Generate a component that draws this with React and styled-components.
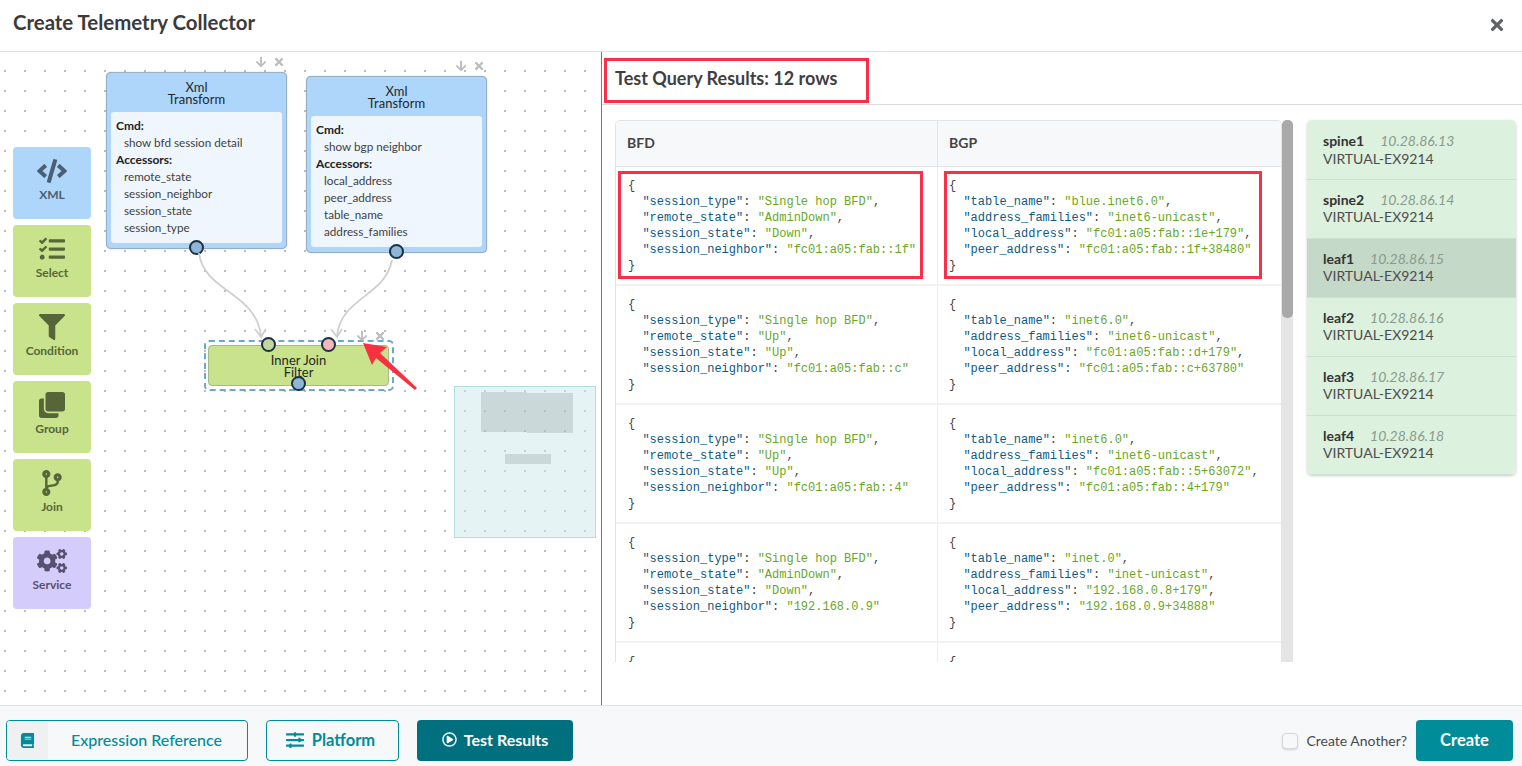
import React from 'react'
import styled, { createGlobalStyle } from 'styled-components'
import {
  FaCode, FaTasks, FaFilter, FaClone, FaCodeBranch, FaCogs, FaBook,
  FaSlidersH, FaRegPlayCircle, FaTimes, FaArrowDown,
} from 'react-icons/fa'

const palette = [
  { label: 'XML', Icon: FaCode, kind: 'xml' },
  { label: 'Select', Icon: FaTasks, kind: 'logic' },
  { label: 'Condition', Icon: FaFilter, kind: 'logic' },
  { label: 'Group', Icon: FaClone, kind: 'logic' },
  { label: 'Join', Icon: FaCodeBranch, kind: 'logic' },
  { label: 'Service', Icon: FaCogs, kind: 'service' },
]

const paletteColors = {
  xml: { bg: '#aed6fb', fg: '#4b5f72' },
  logic: { bg: '#c8e38b', fg: '#56663a' },
  service: { bg: '#d4ccfb', fg: '#57506e' },
}

const rows = [
  {
    bfd: [['session_type', 'Single hop BFD'], ['remote_state', 'AdminDown'], ['session_state', 'Down'], ['session_neighbor', 'fc01:a05:fab::1f']],
    bgp: [['table_name', 'blue.inet6.0'], ['address_families', 'inet6-unicast'], ['local_address', 'fc01:a05:fab::1e+179'], ['peer_address', 'fc01:a05:fab::1f+38480']],
    marked: true,
  },
  {
    bfd: [['session_type', 'Single hop BFD'], ['remote_state', 'Up'], ['session_state', 'Up'], ['session_neighbor', 'fc01:a05:fab::c']],
    bgp: [['table_name', 'inet6.0'], ['address_families', 'inet6-unicast'], ['local_address', 'fc01:a05:fab::d+179'], ['peer_address', 'fc01:a05:fab::c+63780']],
  },
  {
    bfd: [['session_type', 'Single hop BFD'], ['remote_state', 'Up'], ['session_state', 'Up'], ['session_neighbor', 'fc01:a05:fab::4']],
    bgp: [['table_name', 'inet6.0'], ['address_families', 'inet6-unicast'], ['local_address', 'fc01:a05:fab::5+63072'], ['peer_address', 'fc01:a05:fab::4+179']],
  },
  {
    bfd: [['session_type', 'Single hop BFD'], ['remote_state', 'AdminDown'], ['session_state', 'Down'], ['session_neighbor', '192.168.0.9']],
    bgp: [['table_name', 'inet.0'], ['address_families', 'inet-unicast'], ['local_address', '192.168.0.8+179'], ['peer_address', '192.168.0.9+34888']],
  },
  { bfd: [], bgp: [], clipped: true },
]

const devices = [
  { name: 'spine1', ip: '10.28.86.13' },
  { name: 'spine2', ip: '10.28.86.14' },
  { name: 'leaf1', ip: '10.28.86.15', active: true },
  { name: 'leaf2', ip: '10.28.86.16' },
  { name: 'leaf3', ip: '10.28.86.17' },
  { name: 'leaf4', ip: '10.28.86.18' },
]

function Json({ pairs, clipped }) {
  if (clipped) return <Code>{'{'}</Code>
  return (
    <Code>
      {'{\n'}
      {pairs.map(([k, v], i) => (
        <React.Fragment key={k}>
          {'  '}<Key>"{k}"</Key>: <Str>"{v}"</Str>{i < pairs.length - 1 ? ',' : ''}{'\n'}
        </React.Fragment>
      ))}
      {'}'}
    </Code>
  )
}

function QueryNode({ x, y, cmd, accessors }) {
  return (
    <Node $x={x} $y={y}>
      <NodeTools><FaArrowDown /><FaTimes /></NodeTools>
      <NodeTitle>Xml<br />Transform</NodeTitle>
      <NodeBody>
        <b>Cmd:</b>
        <NodeLine>{cmd}</NodeLine>
        <b>Accessors:</b>
        {accessors.map(a => <NodeLine key={a}>{a}</NodeLine>)}
      </NodeBody>
      <Port $color="#8fb6d8" $left={82} $bottom={-7} />
    </Node>
  )
}

export default function App() {
  return (
    <Page>
      <GlobalStyle />
      <Header>
        <Title>Create Telemetry Collector</Title>
        <CloseBtn><FaTimes /></CloseBtn>
      </Header>
      <Body>
        <Canvas>
          <Palette>
            {palette.map(({ label, Icon, kind }) => (
              <PaletteItem key={label} $kind={kind}>
                <Icon />
                <span>{label}</span>
              </PaletteItem>
            ))}
          </Palette>

          <QueryNode
            x={106}
            y={20}
            cmd="show bfd session detail"
            accessors={['remote_state', 'session_neighbor', 'session_state', 'session_type']}
          />
          <QueryNode
            x={306}
            y={24}
            cmd="show bgp neighbor"
            accessors={['local_address', 'peer_address', 'table_name', 'address_families']}
          />

          <Wires viewBox="0 0 601 653">
            <path d="M199 201 C204 240 256 240 261 284" />
            <path d="M255 277 L261 285 L266 277" />
            <path d="M392 208 C385 245 341 245 337 284" />
            <path d="M331 277 L337 285 L342 277" />
          </Wires>

          <JoinSelection>
            <JoinNode>Inner Join<br />Filter</JoinNode>
            <Port $color="#c3d69b" $left={55} $bottom={37} />
            <Port $color="#f7b7ba" $left={115} $bottom={37} />
            <Port $color="#8fb6d8" $left={85} $bottom={-2} />
            <JoinTools><FaArrowDown /><FaTimes /></JoinTools>
          </JoinSelection>

          <RedArrow viewBox="0 0 601 653">
            <path d="M363 291 L387 295 L380 301 L417 336 L415 338 L376 306 L372 313 Z" />
          </RedArrow>

          <MiniMap>
            <MiniBlock $w={46} $h={40} $x={26} $y={5} />
            <MiniBlock $w={46} $h={40} $x={72} $y={6} />
            <MiniBlock $w={46} $h={10} $x={50} $y={67} />
          </MiniMap>
        </Canvas>

        <Results>
          <ResultsHead>
            <ResultsTitle>Test Query Results: 12 rows</ResultsTitle>
            <HeadMark />
          </ResultsHead>
          <ResultsMain>
            <TableWrap>
              <Table>
                <TableHead>
                  <HeadCell>BFD</HeadCell>
                  <HeadCell>BGP</HeadCell>
                </TableHead>
                {rows.map((row, i) => (
                  <Row key={i}>
                    <Cell>
                      <Json pairs={row.bfd} clipped={row.clipped} />
                      {row.marked && <BfdMark />}
                    </Cell>
                    <Cell>
                      <Json pairs={row.bgp} clipped={row.clipped} />
                      {row.marked && <BgpMark />}
                    </Cell>
                  </Row>
                ))}
              </Table>
              <ScrollTrack><ScrollThumb /></ScrollTrack>
            </TableWrap>
            <DeviceList>
              {devices.map(d => (
                <Device key={d.name} $active={d.active}>
                  <DeviceTop><b>{d.name}</b><em>{d.ip}</em></DeviceTop>
                  <div>VIRTUAL-EX9214</div>
                </Device>
              ))}
            </DeviceList>
          </ResultsMain>
        </Results>
      </Body>
      <Footer>
        <RefButton>
          <RefIcon><FaBook /></RefIcon>
          <RefLabel>Expression Reference</RefLabel>
        </RefButton>
        <OutlineButton><FaSlidersH />Platform</OutlineButton>
        <SolidButton><FaRegPlayCircle />Test Results</SolidButton>
        <FooterRight>
          <CheckLabel><CheckBox />Create Another?</CheckLabel>
          <CreateButton>Create</CreateButton>
        </FooterRight>
      </Footer>
    </Page>
  )
}

const GlobalStyle = createGlobalStyle`
  html, body {
    margin: 0;
    padding: 0;
    background: #fff;
    font-family: Lato, "Open Sans", sans-serif;
    color: #3c3c3c;
  }
  * { box-sizing: border-box; }
`

const Page = styled.div`
  width: 1522px;
  height: 766px;
  display: flex;
  flex-direction: column;
  overflow: hidden;
`

const Header = styled.header`
  height: 52px;
  flex: none;
  display: flex;
  align-items: center;
  justify-content: space-between;
  padding: 0 16px 8px 13px;
  border-bottom: 1px solid #dfe1e4;
`

const Title = styled.h1`
  margin: 0;
  font-size: 20.4px;
  font-weight: 700;
  color: #3b3b3b;
`

const CloseBtn = styled.div`
  display: flex;
  font-size: 18px;
  color: #5f6368;
  margin-top: 6px;
`

const Body = styled.main`
  flex: 1;
  min-height: 0;
  display: flex;
`

const Canvas = styled.section`
  position: relative;
  width: 602px;
  flex: none;
  border-right: 1px solid #777;
  overflow: hidden;
  background-image: radial-gradient(circle at 1px 1px, #b9bdbd 1px, transparent 1.3px);
  background-size: 20px 20px;
  background-position: 4px 18px;
`

const Palette = styled.div`
  position: absolute;
  left: 13px;
  top: 95px;
  display: flex;
  flex-direction: column;
  gap: 6px;
`

const PaletteItem = styled.div`
  width: 78px;
  height: 72px;
  border-radius: 4px;
  background: ${p => paletteColors[p.$kind].bg};
  color: ${p => paletteColors[p.$kind].fg};
  display: flex;
  flex-direction: column;
  align-items: center;
  padding-top: 11px;
  font-size: 12px;
  font-weight: 700;
  svg {
    width: 30px;
    height: 26px;
    margin-bottom: 3px;
  }
`

const Node = styled.div`
  position: absolute;
  left: ${p => p.$x}px;
  top: ${p => p.$y}px;
  width: 181px;
  height: 177px;
  padding: 4px;
  background: #aed6fb;
  border: 1px solid #97aec3;
  border-radius: 5px;
  box-shadow: 0 0 1px #7f9ab3;
`

const NodeTools = styled.div`
  position: absolute;
  right: 1px;
  top: -17px;
  display: flex;
  gap: 6px;
  color: #bcbcbc;
  font-size: 12px;
`

const NodeTitle = styled.div`
  height: 35px;
  text-align: center;
  font-size: 13px;
  line-height: 12px;
  padding-top: 4px;
  color: #262626;
`

const NodeBody = styled.div`
  height: 131px;
  background: #eff6fd;
  border-radius: 3px;
  padding: 5px;
  font-size: 12px;
  line-height: 17px;
  color: #3f3f3f;
  b { display: block; color: #222; }
`

const NodeLine = styled.div`
  padding-left: 8px;
  font-size: 11.7px;
`

const Port = styled.div`
  position: absolute;
  left: ${p => p.$left}px;
  bottom: ${p => p.$bottom}px;
  width: 15px;
  height: 15px;
  border-radius: 50%;
  background: ${p => p.$color};
  border: 2px solid #1c3146;
`

const Wires = styled.svg`
  position: absolute;
  left: 0;
  top: 0;
  width: 601px;
  height: 653px;
  pointer-events: none;
  path {
    fill: none;
    stroke: #cfcfcf;
    stroke-width: 1.8;
  }
`

const JoinSelection = styled.div`
  position: absolute;
  left: 204px;
  top: 288px;
  width: 190px;
  height: 51px;
  padding: 3px 3px 0 2px;
  border: 2px dashed #69a9cf;
  border-radius: 5px;
`

const JoinNode = styled.div`
  height: 41px;
  background: #c8e38b;
  border: 1px solid #a9b88c;
  border-radius: 4px;
  text-align: center;
  font-size: 13px;
  line-height: 12px;
  padding-top: 8px;
  color: #262626;
`

const JoinTools = styled(NodeTools)`
  right: 6px;
  top: -12px;
`

const RedArrow = styled.svg`
  position: absolute;
  left: 0;
  top: 0;
  width: 601px;
  height: 653px;
  pointer-events: none;
  path { fill: #f8303f; }
`

const MiniMap = styled.div`
  position: absolute;
  left: 454px;
  top: 334px;
  width: 142px;
  height: 152px;
  border: 1px solid #b0dde0;
  background: rgba(205, 232, 235, 0.5);
`

const MiniBlock = styled.div`
  position: absolute;
  left: ${p => p.$x}px;
  top: ${p => p.$y}px;
  width: ${p => p.$w}px;
  height: ${p => p.$h}px;
  background: rgba(150, 165, 165, 0.35);
`

const Results = styled.section`
  flex: 1;
  min-width: 0;
  display: flex;
  flex-direction: column;
`

const ResultsHead = styled.div`
  position: relative;
  height: 53px;
  flex: none;
  display: flex;
  align-items: center;
  padding: 0 13px;
  border-bottom: 1px solid #d9dbde;
`

const ResultsTitle = styled.h2`
  margin: 0;
  font-size: 18px;
  font-weight: 700;
  color: #3f3f3f;
`

const HeadMark = styled.div`
  position: absolute;
  left: 2px;
  top: 6px;
  width: 265px;
  height: 45px;
  border: 3px solid #f9304a;
`

const ResultsMain = styled.div`
  display: flex;
  gap: 14px;
  padding: 15px 6px 0 13px;
`

const TableWrap = styled.div`
  display: flex;
  height: 542px;
`

const Table = styled.div`
  width: 667px;
  height: 100%;
  overflow: hidden;
  border: 1px solid #e1e3e6;
  border-bottom: none;
  border-radius: 5px 5px 0 0;
`

const TableHead = styled.div`
  display: grid;
  grid-template-columns: 321px 1fr;
  height: 46px;
  background: #f7f8fa;
  border-bottom: 1px solid #e1e3e6;
`

const HeadCell = styled.div`
  display: flex;
  align-items: center;
  padding: 0 0 2px 11px;
  font-size: 14px;
  font-weight: 700;
  color: #444;
  & + & { border-left: 1px solid #e1e3e6; }
`

const Row = styled.div`
  display: grid;
  grid-template-columns: 321px 1fr;
  height: 119px;
  border-bottom: 2px solid #f1f2f3;
`

const Cell = styled.div`
  position: relative;
  padding: 11px 8px 0 12px;
  & + & {
    border-left: 1px solid #eceef0;
    padding-left: 11px;
  }
`

const Code = styled.pre`
  margin: 0;
  font-family: "Liberation Mono", monospace;
  font-size: 12px;
  line-height: 16px;
  color: #444;
`

const Key = styled.span`
  color: #0c5a85;
`

const Str = styled.span`
  color: #69a81e;
`

const BfdMark = styled.div`
  position: absolute;
  left: 2px;
  top: 4px;
  width: 305px;
  height: 108px;
  border: 3px solid #f9304a;
`

const BgpMark = styled.div`
  position: absolute;
  left: 6px;
  top: 4px;
  width: 318px;
  height: 108px;
  border: 3px solid #f9304a;
`

const ScrollTrack = styled.div`
  width: 11px;
  background: #e5e5e5;
  border-radius: 5px 5px 0 0;
`

const ScrollThumb = styled.div`
  height: 198px;
  background: #a9a9a9;
  border-radius: 5px;
`

const DeviceList = styled.div`
  width: 210px;
  align-self: flex-start;
  border-radius: 5px;
  overflow: hidden;
  box-shadow: 0 1px 3px rgba(0, 0, 0, 0.2);
`

const Device = styled.div`
  height: 59px;
  padding: 11px 16px 0;
  background: ${p => (p.$active ? '#c5d9c8' : '#dcf1de')};
  border-bottom: 1px solid #cfe0d2;
  font-size: 14px;
  line-height: 17px;
  color: #4c4c4c;
  &:first-child {
    height: 60px;
    padding-top: 12px;
    line-height: 18px;
  }
`

const DeviceTop = styled.div`
  display: flex;
  gap: 16px;
  b { color: #333; }
  em { color: #8a9a8c; }
`

const Footer = styled.footer`
  height: 61px;
  flex: none;
  display: flex;
  align-items: center;
  gap: 18px;
  padding: 9px 9px 0 6px;
  background: #f7f8fa;
  border-top: 1px solid #dfe1e4;
`

const RefButton = styled.div`
  width: 242px;
  height: 41px;
  display: flex;
  border: 1px solid #008c99;
  border-radius: 4px;
  overflow: hidden;
  color: #008c99;
`

const RefIcon = styled.div`
  width: 41px;
  background: #eef0f2;
  display: flex;
  align-items: center;
  justify-content: center;
  font-size: 15px;
`

const RefLabel = styled.div`
  flex: 1;
  display: flex;
  align-items: center;
  justify-content: center;
  font-size: 16px;
  font-weight: 500;
  padding: 0 2px 2px 0;
`

const OutlineButton = styled.div`
  width: 133px;
  height: 41px;
  display: flex;
  align-items: center;
  justify-content: center;
  gap: 8px;
  padding: 0 4px 2px 0;
  border: 1px solid #008c99;
  border-radius: 4px;
  color: #008c99;
  font-size: 16.5px;
  font-weight: 700;
  svg { font-size: 18px; }
`

const SolidButton = styled.div`
  width: 156px;
  height: 41px;
  display: flex;
  align-items: center;
  justify-content: center;
  gap: 7px;
  padding-bottom: 2px;
  border-radius: 4px;
  background: #00707f;
  color: #fff;
  font-size: 16px;
  font-weight: 700;
  svg { font-size: 15px; }
`

const FooterRight = styled.div`
  margin-left: auto;
  display: flex;
  align-items: center;
  gap: 9px;
`

const CheckLabel = styled.div`
  display: flex;
  align-items: center;
  gap: 8px;
  font-size: 14px;
  color: #4a4a4a;
`

const CheckBox = styled.div`
  width: 16px;
  height: 16px;
  background: #f7f8fa;
  border: 1px solid #d8d8d8;
  border-radius: 4px;
  box-shadow: 0 1px 2px rgba(0, 0, 0, 0.15);
`

const CreateButton = styled.div`
  width: 97px;
  height: 41px;
  display: flex;
  align-items: center;
  justify-content: center;
  padding-bottom: 2px;
  border-radius: 4px;
  background: #008c99;
  color: #fff;
  font-size: 16.5px;
  font-weight: 700;
`
